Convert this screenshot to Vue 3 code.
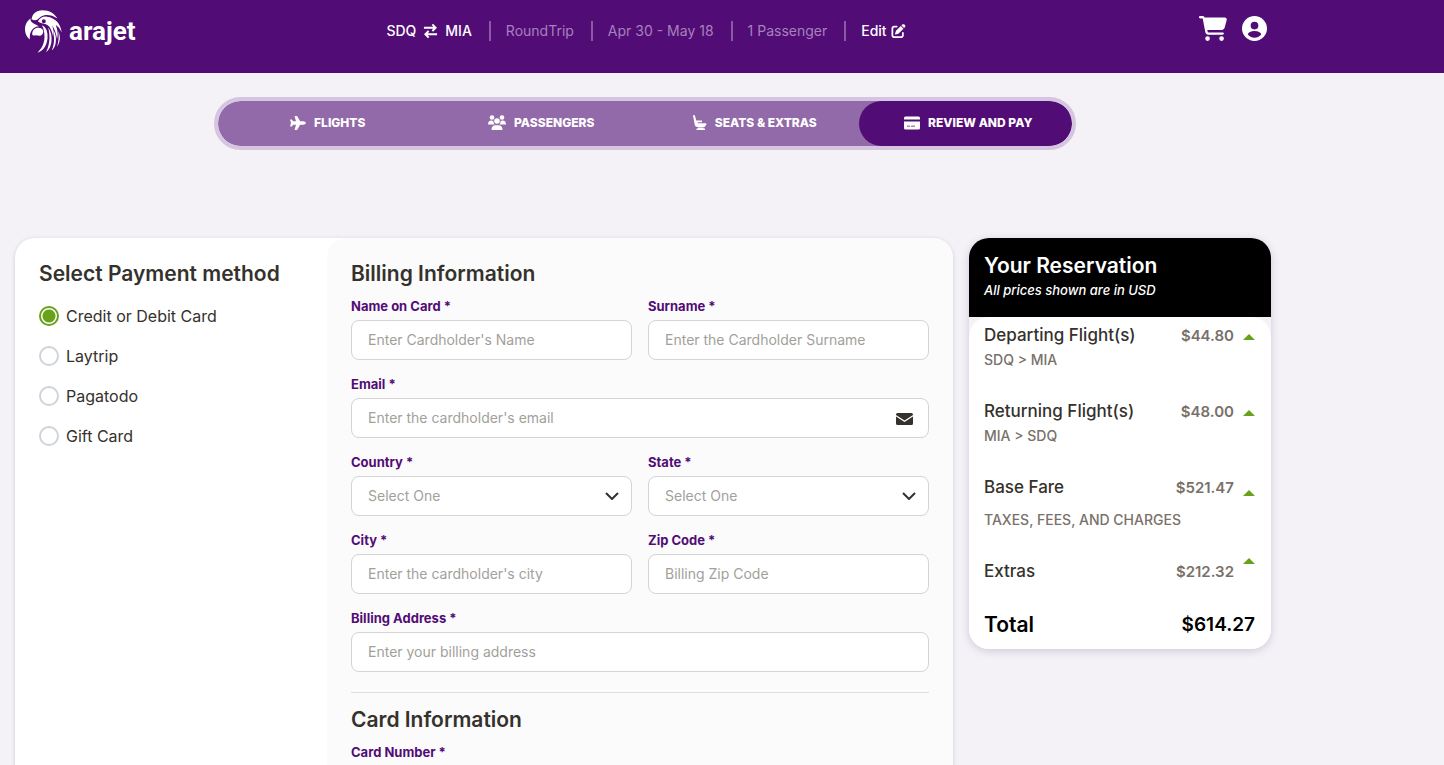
<script setup>
import { ref } from 'vue'

const method = ref('Credit or Debit Card')
const methods = ['Credit or Debit Card', 'Laytrip', 'Pagatodo', 'Gift Card']

const billing = [
  { id: 'name', label: 'Name on Card *', hint: "Enter Cardholder's Name" },
  { id: 'surname', label: 'Surname *', hint: 'Enter the Cardholder Surname' },
  { id: 'email', label: 'Email *', hint: "Enter the cardholder's email", wide: true, mail: true },
  { id: 'country', label: 'Country *', hint: 'Select One', select: true },
  { id: 'state', label: 'State *', hint: 'Select One', select: true },
  { id: 'city', label: 'City *', hint: "Enter the cardholder's city" },
  { id: 'zip', label: 'Zip Code *', hint: 'Billing Zip Code' },
  { id: 'address', label: 'Billing Address *', hint: 'Enter your billing address', wide: true },
]
</script>

<template>
  <div class="page">
    <header class="topbar">
      <div class="topbar-inner">
        <a href="#" class="logo">
          <svg class="parrot" viewBox="74 29 112 128" aria-hidden="true">
            <path d="M94 56C96 40 108 29 126 29C148 29 164 39 172 54C160 45 147 42 136 43C124 44 118 52 113 56C107 60 100 59 94 56Z" />
            <path d="M91 54C81 60 73 74 74 89C75 101 80 110 89 117C87 101 91 91 100 83C106 78 112 77 116 78C110 72 99 69 94 64C91 61 90 58 91 54Z" />
            <path d="M96 103C95 92 101 85 110 82C119 80 127 83 129 91C130 98 127 103 122 105C117 107 112 104 107 104C103 104 99 107 96 103Z" />
            <path fill-rule="evenodd" d="M113 63C119 52 128 47 140 48C166 51 183 70 185 96C180 84 174 77 167 73C174 90 174 104 171 116C168 98 164 85 156 75C161 88 161 98 159 108C156 92 151 80 143 74C133 68 122 70 113 63ZM125 62A6 6 0 1 0 137 62A6 6 0 1 0 125 62Z" />
            <path d="M125 74C137 78 144 94 142 114C140 134 131 151 112 157C126 142 133 128 133 108C133 94 130 83 125 74Z" />
            <path d="M144 81C152 91 156 107 154 124C152 140 145 151 138 155C145 141 148 126 148 112C148 100 147 90 144 81Z" />
            <path d="M160 88C167 101 169 113 167 126C166 137 161 145 155 150C160 139 162 128 162 115Z" />
            <path d="M175 92C182 108 181 124 171 139C176 124 177 107 175 92Z" />
          </svg>
          <span class="brand">arajet</span>
        </a>

        <div class="trip">
          <span class="route">SDQ
            <svg class="swap" viewBox="0 0 16 16" aria-hidden="true">
              <path d="M1 4.500H13M10 1L13.500 4.500L10 8M15 11.500H3M6 8L2.500 11.500L6 15" />
            </svg>
            MIA</span>
          <span class="info">RoundTrip</span>
          <span class="info">Apr 30 - May 18</span>
          <span class="info">1 Passenger</span>
          <a href="#" class="edit">Edit
            <svg viewBox="0 0 512 512" aria-hidden="true">
              <path d="M471.600 21.700c-21.900-21.900-57.300-21.900-79.200 0L362.300 51.700l97.900 97.900 30.100-30.100c21.900-21.900 21.900-57.300 0-79.200L471.600 21.700zm-299.200 220c-6.100 6.100-10.800 13.600-13.500 21.900l-29.600 88.800c-2.900 8.600-.6 18.100 5.800 24.600s15.900 8.700 24.600 5.800l88.800-29.600c8.200-2.700 15.700-7.400 21.900-13.500L437.700 172.300 339.700 74.300 172.400 241.700zM96 64C43 64 0 107 0 160L0 416c0 53 43 96 96 96l256 0c53 0 96-43 96-96l0-96c0-17.700-14.300-32-32-32s-32 14.300-32 32l0 96c0 17.700-14.300 32-32 32L96 448c-17.700 0-32-14.300-32-32l0-256c0-17.700 14.300-32 32-32l96 0c17.700 0 32-14.300 32-32s-14.300-32-32-32L96 64z" />
            </svg>
          </a>
        </div>

        <div class="actions">
          <button type="button" aria-label="Cart">
            <svg class="cart" viewBox="0 0 576 512" aria-hidden="true">
              <path d="M0 24C0 10.700 10.700 0 24 0L69.500 0c22 0 41.500 12.800 50.600 32l411 0c26.300 0 45.500 25 38.600 50.400l-41 152.300c-8.500 31.400-37 53.300-69.500 53.300l-288.500 0 5.400 28.500c2.200 11.300 12.100 19.500 23.600 19.500L488 336c13.300 0 24 10.700 24 24s-10.700 24-24 24l-288.300 0c-34.600 0-64.300-24.600-70.700-58.500L77.400 54.500c-.7-3.800-4-6.500-7.900-6.500L24 48C10.700 48 0 37.300 0 24zM128 464a48 48 0 1 1 96 0 48 48 0 1 1 -96 0zm336-48a48 48 0 1 1 0 96 48 48 0 1 1 0-96z" />
            </svg>
          </button>
          <button type="button" aria-label="Account">
            <svg class="account" viewBox="0 0 24 24" aria-hidden="true">
              <path fill-rule="evenodd" d="M12 0A12 12 0 1 0 12 24A12 12 0 1 0 12 0ZM12 5.500A3.700 3.700 0 1 1 12 12.900A3.700 3.700 0 1 1 12 5.500ZM12 14.500C15.500 14.500 18 15.800 18.500 17.500C17 19.700 15 20.800 12 20.800C9 20.800 7 19.700 5.500 17.500C6 15.800 8.500 14.500 12 14.500Z" />
            </svg>
          </button>
        </div>
      </div>
    </header>

    <main class="content">
      <nav class="steps">
        <a href="#" class="step">
          <svg viewBox="0 0 576 512" aria-hidden="true">
            <path d="M482.300 192c34.200 0 93.700 29 93.700 64c0 36-59.500 64-93.700 64l-116.600 0L265.200 495.900c-5.700 10-16.300 16.100-27.800 16.100l-56.200 0c-10.600 0-18.300-10.200-15.400-20.400l49-171.600L112 320 68.800 377.600c-3 4-7.800 6.400-12.800 6.400l-42 0c-7.800 0-14-6.300-14-14c0-1.300 .2-2.600 .5-3.900L32 256 .5 145.900c-.4-1.300-.5-2.600-.5-3.900c0-7.800 6.300-14 14-14l42 0c5 0 9.800 2.400 12.800 6.400L112 192l102.900 0-49-171.600C162.900 10.200 170.600 0 181.200 0l56.200 0c11.500 0 22.100 6.200 27.800 16.100L365.700 192l116.600 0z" />
          </svg>
          FLIGHTS
        </a>
        <a href="#" class="step">
          <svg class="people" viewBox="0 0 18 15" aria-hidden="true">
            <circle cx="4" cy="2.500" r="2.300" />
            <circle cx="14" cy="2.500" r="2.300" />
            <circle cx="9" cy="6" r="2.800" />
            <path d="M0 9.500C0 7 1.300 5.500 3.300 5.500C4.300 5.500 5 5.700 5.400 6.200C5.400 7.500 5.900 8.700 6.800 9.500ZM18 9.500C18 7 16.700 5.500 14.700 5.500C13.700 5.500 13 5.700 12.600 6.200C12.600 7.500 12.100 8.700 11.200 9.500ZM3.500 15C3.500 11.800 5 10.300 7.500 10.300H10.500C13 10.300 14.500 11.800 14.500 15Z" />
          </svg>
          PASSENGERS
        </a>
        <a href="#" class="step">
          <svg class="seat" viewBox="0 0 14 15" aria-hidden="true">
            <path d="M0 .8C.2-.2 1.800-.2 2.100 1L3.200 5.500H9V7.300H4.500L4.800 8.200H13.300V9.800L11.500 12H4.500C3 12 2.200 11.300 1.800 10ZM5 12.500H10.500V13.500H12V15H3.500V13.500H5Z" />
          </svg>
          SEATS &amp; EXTRAS
        </a>
        <a href="#" class="step active" aria-current="step">
          <svg viewBox="0 0 16 13" aria-hidden="true">
            <path fill-rule="evenodd" d="M1.500 0H14.500Q16 0 16 1.500V3H0V1.500Q0 0 1.500 0ZM0 5H16V11.500Q16 13 14.500 13H1.500Q0 13 0 11.500ZM3 9.300V10H6V9.300ZM7 9.300V10H11V9.300Z" />
          </svg>
          REVIEW AND PAY
        </a>
      </nav>

      <div class="columns">
        <section class="card">
          <div class="methods" role="radiogroup" aria-labelledby="methods-title">
            <h2 id="methods-title">Select Payment method</h2>
            <label v-for="m in methods" :key="m" class="method">
              <input v-model="method" type="radio" name="method" :value="m" />
              {{ m }}
            </label>
          </div>

          <form class="billing" @submit.prevent>
            <h2>Billing Information</h2>
            <div class="fields">
              <div v-for="f in billing" :key="f.id" class="field" :class="{ wide: f.wide }">
                <label :for="f.id">{{ f.label }}</label>
                <div class="control">
                  <select v-if="f.select" :id="f.id">
                    <option>{{ f.hint }}</option>
                  </select>
                  <input v-else :id="f.id" type="text" :placeholder="f.hint" />
                  <svg v-if="f.select" class="chevron" viewBox="0 0 14 8" aria-hidden="true">
                    <path d="M1 1L7 7L13 1" />
                  </svg>
                  <svg v-if="f.mail" class="mail" viewBox="0 0 17 12" aria-hidden="true">
                    <path d="M1.500 0H15.500Q17 0 17 1.500V2L8.500 7.500L0 2V1.500Q0 0 1.500 0ZM0 3.400L8.500 9L17 3.400V10.500Q17 12 15.500 12H1.500Q0 12 0 10.500Z" />
                  </svg>
                </div>
              </div>
            </div>
            <hr />
            <h2>Card Information</h2>
            <div class="field">
              <label for="card-number">Card Number *</label>
              <div class="control"><input id="card-number" type="text" inputmode="numeric" /></div>
            </div>
          </form>
        </section>

        <aside class="summary">
          <header class="summary-head">
            <h2>Your Reservation</h2>
            <p>All prices shown are in USD</p>
          </header>
          <div class="summary-body">
            <div class="line">
              <div class="line-main"><span>Departing Flight(s)</span><b>$44.80</b><i class="caret"></i></div>
              <div class="sub">SDQ &gt; MIA</div>
            </div>
            <div class="line">
              <div class="line-main"><span>Returning Flight(s)</span><b>$48.00</b><i class="caret"></i></div>
              <div class="sub">MIA &gt; SDQ</div>
            </div>
            <div class="line fare">
              <div class="line-main"><span>Base Fare</span><b>$521.47</b><i class="caret low"></i></div>
              <div class="sub">TAXES, FEES, AND CHARGES</div>
            </div>
            <div class="line extras">
              <div class="line-main"><span>Extras</span><b>$212.32</b><i class="caret high"></i></div>
            </div>
            <div class="total"><span>Total</span><b>$614.27</b></div>
          </div>
        </aside>
      </div>
    </main>
  </div>
</template>

<style>
body {
  background: #f4f2f7;
}
</style>

<style scoped>
* {
  box-sizing: border-box;
}
.page {
  height: 100vh;
  overflow-y: auto;
  scrollbar-width: none;
  background: #f4f2f7;
  color: #35312c;
  font-family: Inter, "Liberation Sans", sans-serif;
}
h2,
p {
  margin: 0;
}
h2 {
  font-size: 21px;
  line-height: 28px;
  font-weight: 600;
}
a {
  color: inherit;
  text-decoration: none;
}
svg {
  fill: currentColor;
  flex: none;
}

.topbar {
  background: #520c76;
  color: #fff;
}
.topbar-inner {
  max-width: 1290px;
  height: 73px;
  padding: 0 23px 0 25px;
  display: grid;
  grid-template-columns: 1fr auto 1fr;
  align-items: start;
}
.logo {
  display: flex;
  gap: 7px;
  padding-top: 10px;
}
.parrot {
  width: 37px;
  height: 43px;
}
.brand {
  font: bold 26px/42px Roboto, sans-serif;
}
.trip {
  display: flex;
  align-items: center;
  padding-top: 21px;
  font-size: 14px;
  line-height: 20px;
}
.trip > * {
  display: flex;
  align-items: center;
}
.trip > * + * {
  margin-left: 17px;
  padding-left: 15px;
  border-left: 2px solid #8a5ba5;
}
.trip .info {
  color: #a681bb;
}
.route {
  gap: 7px;
  font-weight: 500;
}
.swap {
  width: 15px;
  height: 16px;
  fill: none;
  stroke: currentColor;
  stroke-width: 2;
}
.edit {
  gap: 4px;
  font-weight: 500;
}
.edit svg {
  width: 15px;
  height: 14px;
}
.actions {
  display: flex;
  justify-content: flex-end;
  align-items: center;
  gap: 15px;
  padding-top: 16px;
}
.actions button {
  display: flex;
  padding: 0;
  border: 0;
  background: none;
  color: inherit;
}
.cart {
  width: 28px;
  height: 25px;
}
.account {
  width: 25px;
  height: 25px;
}

.content {
  max-width: 1290px;
}
.steps {
  width: 67%;
  max-width: 862px;
  margin: 24px auto 0;
  display: grid;
  grid-template-columns: repeat(4, 1fr);
  border: 4px solid #d5c5e0;
  border-radius: 27px;
  background: #9269a9;
  background-clip: padding-box;
  overflow: hidden;
}
.step {
  height: 45px;
  padding: 0 0 2px 6px;
  display: flex;
  align-items: center;
  justify-content: center;
  gap: 8px;
  color: #fff;
  font-size: 12px;
  font-weight: 800;
}
.step svg {
  width: 16px;
  height: 14px;
}
.step svg.people {
  width: 18px;
  height: 15px;
}
.step svg.seat {
  width: 14px;
  height: 15px;
}
.step.active {
  background: #520c76;
  border-radius: 23px;
}

.columns {
  display: flex;
  align-items: flex-start;
  gap: 16px;
  padding: 88px 19px 24px 15px;
}
.card {
  flex: 1;
  display: grid;
  grid-template-columns: 312px 1fr;
  background: #fff;
  border-radius: 20px;
  box-shadow: 0 1px 4px rgba(60, 40, 90, 0.2);
}
.methods {
  padding: 22px 24px;
}
.method {
  display: flex;
  align-items: center;
  gap: 7px;
  height: 40px;
  font-size: 16px;
}
.methods h2 {
  margin-bottom: 8px;
}
.method input {
  appearance: none;
  width: 20px;
  height: 20px;
  margin: 0;
  border: 2px solid #ced4da;
  border-radius: 50%;
  background: #fff;
}
.method input:checked {
  border-color: #69a11a;
  background: radial-gradient(circle, #69a11a 6px, #fff 7px);
}
.billing {
  padding: 22px 24px 32px;
  background: #fbfbfb;
  border-radius: 20px;
}
.billing h2 {
  margin-bottom: 8px;
}
.fields {
  display: grid;
  grid-template-columns: 1fr 1fr;
  gap: 14px 16px;
}
.wide {
  grid-column: span 2;
}
.field label {
  display: block;
  margin-bottom: 4px;
  color: #520c76;
  font-size: 13px;
  line-height: 20px;
  font-weight: 700;
}
.control {
  position: relative;
  display: flex;
}
.control input,
.control select {
  width: 100%;
  height: 40px;
  padding: 0 16px 2px;
  border: 1px solid #d5d4d3;
  border-radius: 8px;
  background: #fff;
  color: #a39f9b;
  font-family: inherit;
  font-size: 14px;
  appearance: none;
}
.control input::placeholder {
  color: #a39f9b;
  opacity: 1;
}
.chevron {
  position: absolute;
  right: 13px;
  top: 16px;
  width: 14px;
  height: 8px;
  fill: none;
  stroke: #35312c;
  stroke-width: 2;
  pointer-events: none;
}
.mail {
  position: absolute;
  right: 16px;
  top: 15px;
  width: 17px;
  height: 12px;
  color: #35312c;
}
hr {
  height: 1px;
  margin: 20px 0 13px;
  border: 0;
  background: #dfdfe0;
}

.summary {
  flex: 0 0 302px;
  border-radius: 20px;
  box-shadow: 0 2px 8px rgba(60, 40, 90, 0.2);
}
.summary-head {
  height: 79px;
  padding: 14px 15px;
  border-radius: 20px 20px 0 0;
  background: #000;
  color: #fff;
}
.summary-head p {
  font-size: 13px;
  line-height: 20px;
  font-style: italic;
  font-weight: 500;
}
.summary-body {
  padding: 6px 16px 10px 15px;
  border-radius: 20px;
  background: #fff;
}
.line {
  height: 76px;
}
.line-main {
  display: flex;
  align-items: center;
  height: 24px;
  font-size: 17px;
  font-weight: 500;
}
.line-main b {
  margin-left: auto;
  color: #78716a;
  font-size: 15px;
  font-weight: 600;
}
.sub {
  color: #78716a;
  font-size: 14px;
  line-height: 26px;
  font-weight: 500;
}
.caret {
  margin-left: 9px;
  margin-top: 4px;
  border: 6px solid transparent;
  border-top: 0;
  border-bottom-color: #69a11a;
}
.caret.low {
  margin-top: 12px;
}
.caret.high {
  margin-bottom: 20px;
  margin-top: 0;
}
.fare {
  height: 84px;
}
.fare .sub {
  padding-top: 8px;
}
.extras {
  height: 52px;
}
.total {
  display: flex;
  justify-content: space-between;
  color: #000;
  font-size: 21px;
  line-height: 28px;
  font-weight: 600;
}
.total b {
  font-size: 19px;
  font-weight: 600;
}
</style>
